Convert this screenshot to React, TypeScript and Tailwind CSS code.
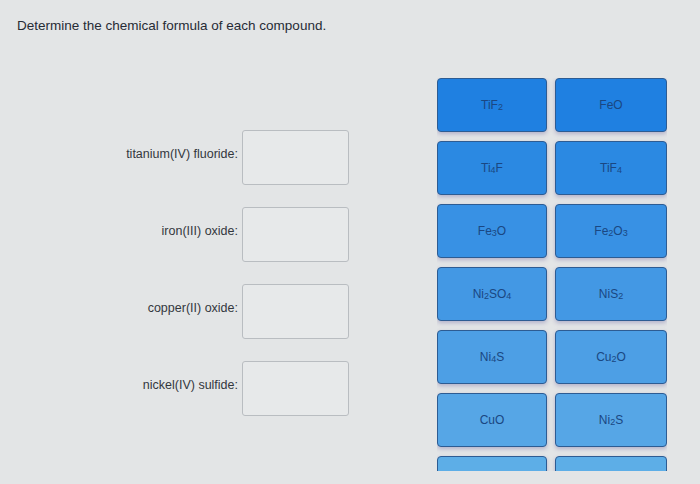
type Part = [string, string?];

const rows: { color: string; items: Part[][] }[] = [
  { color: "bg-[#1f80e1]", items: [[["TiF"], ["", "2"]], [["FeO"]]] },
  { color: "bg-[#2b89e2]", items: [[["Ti"], ["", "4"], ["F"]], [["TiF"], ["", "4"]]] },
  { color: "bg-[#3891e4]", items: [[["Fe"], ["", "3"], ["O"]], [["Fe"], ["", "2"], ["O"], ["", "3"]]] },
  { color: "bg-[#4398e4]", items: [[["Ni"], ["", "2"], ["SO"], ["", "4"]], [["NiS"], ["", "2"]]] },
  { color: "bg-[#4d9fe5]", items: [[["Ni"], ["", "4"], ["S"]], [["Cu"], ["", "2"], ["O"]]] },
  { color: "bg-[#56a6e6]", items: [[["CuO"]], [["Ni"], ["", "2"], ["S"]]] },
  { color: "bg-[#5daee7]", items: [[], []] },
];

const questions = [
  "titanium(IV) fluoride:",
  "iron(III) oxide:",
  "copper(II) oxide:",
  "nickel(IV) sulfide:",
];

function Formula({ parts }: { parts: Part[] }) {
  return (
    <span>
      {parts.map((p, i) =>
        p[1] ? (
          <span key={i} className="text-[9px] relative top-[1px]">
            {p[1]}
          </span>
        ) : (
          <span key={i}>{p[0]}</span>
        )
      )}
    </span>
  );
}

export default function App() {
  return (
    <div
      className="w-[700px] h-[484px] overflow-hidden bg-[#e3e5e6] text-[#333]"
      style={{ fontFamily: '"Liberation Sans", Arial, sans-serif' }}
    >
      <h1 className="pt-[18px] pl-[17px] text-[13.5px] leading-4 text-[#262b35]">
        Determine the chemical formula of each compound.
      </h1>

      <div className="flex mt-[44px]">
        {/* Questions */}
        <div className="w-[437px] pt-[52px] flex flex-col gap-[22px]">
          {questions.map((q) => (
            <div key={q} className="flex items-center">
              <div className="w-[238px] text-right text-[12.5px] text-[#33373d] -mt-[6px]">{q}</div>
              <div className="ml-[4px] w-[107px] h-[55px] rounded-[3px] border border-[#b9bdc1] bg-[#e7e9ea]" />
            </div>
          ))}
        </div>

        {/* Answer tiles */}
        <div className="h-[393px] overflow-hidden flex flex-col gap-[9px]">
          {rows.map((r, ri) => (
            <div key={ri} className="flex gap-[8px]">
              {r.items.map((it, ci) => (
                <div
                  key={ci}
                  className={`${r.color} ${ci === 0 ? "w-[110px]" : "w-[112px]"} h-[54px] shrink-0 rounded-[4px] border border-[#2d5c93] shadow-[0_2px_4px_rgba(90,80,150,0.35)] flex items-center justify-center text-[12px] text-[#1a4782]`}
                >
                  <Formula parts={it} />
                </div>
              ))}
            </div>
          ))}
        </div>
      </div>
    </div>
  );
}
